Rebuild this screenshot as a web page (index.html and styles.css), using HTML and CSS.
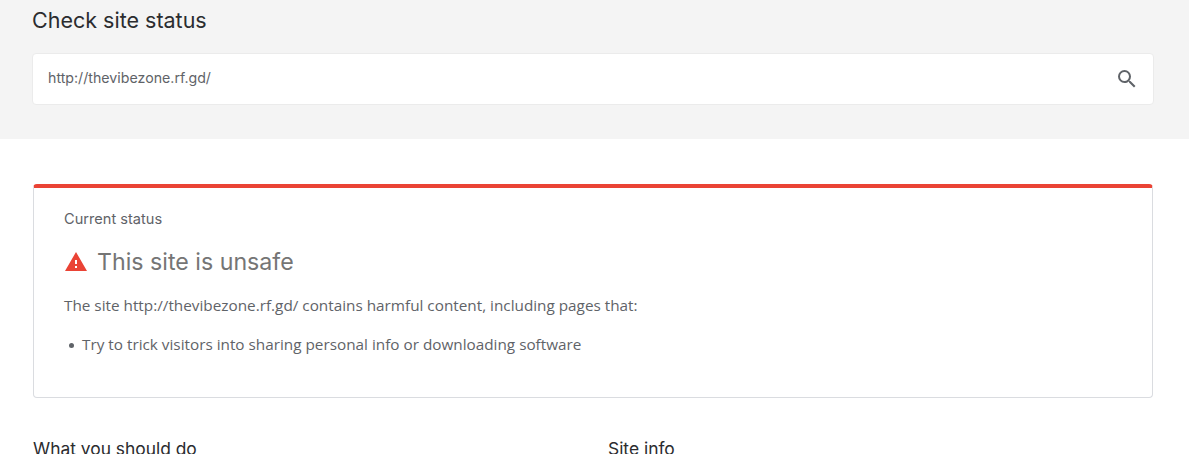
FILE: index.html
```html
<!DOCTYPE html>
<html lang="en">
<head>
  <meta charset="UTF-8" />
  <meta name="viewport" content="width=device-width, initial-scale=1.0"/>
  <title>Check site status</title>
  <link rel="stylesheet" href="styles.css">
</head>
<body>
  <section class="search-band">
    <h1>Check site status</h1>
    <div class="search-box">
      <span class="search-url">http://thevibezone.rf.gd/</span>
      <svg class="search-icon" viewBox="0 0 24 24" width="24" height="24">
        <path d="M15.5 14h-.79l-.28-.27A6.47 6.47 0 0 0 16 9.5 6.5 6.5 0 1 0 9.5 16c1.61 0 3.09-.59 4.23-1.57l.27.28v.79l5 4.99L20.49 19l-4.99-5zm-6 0C7.01 14 5 11.99 5 9.5S7.01 5 9.5 5 14 7.01 14 9.5 11.99 14 9.5 14z"/>
      </svg>
    </div>
  </section>

  <main>
    <div class="status-card">
      <div class="status-label">Current status</div>
      <div class="status-title">
        <svg class="warn-icon" viewBox="0 0 24 24" width="24" height="24">
          <path d="M1 21h22L12 2 1 21zm12-3h-2v-2h2v2zm0-4h-2v-4h2v4z"/>
        </svg>
        <h2>This site is unsafe</h2>
      </div>
      <p class="status-text">The site http://thevibezone.rf.gd/ contains harmful content, including pages that:</p>
      <ul class="status-list">
        <li>Try to trick visitors into sharing personal info or downloading software</li>
      </ul>
    </div>

    <div class="columns">
      <h3>What you should do</h3>
      <h3>Site info</h3>
    </div>
  </main>
</body>
</html>
```

FILE: styles.css
```css
html, body {
  height: 100%;
  overflow: hidden;
}
body {
  margin: 0;
  font-family: "Open Sans", sans-serif;
  color: #5f6368;
  background: #fff;
}
h1, h2, h3, p, ul {
  margin: 0;
  font-weight: 400;
}
.search-band {
  background: #f4f4f4;
  height: 139px;
  padding: 7px 35px 0 32px;
  box-sizing: border-box;
}
.search-band h1 {
  font-family: Inter, sans-serif;
  font-size: 21.5px;
  line-height: 26px;
  color: #2b2c2f;
}
.search-box {
  display: flex;
  align-items: center;
  justify-content: space-between;
  height: 52px;
  margin-top: 20px;
  padding: 0 14px 0 15px;
  background: #fff;
  border: 1px solid #ebebeb;
  border-radius: 4px;
  box-sizing: border-box;
}
.search-url {
  font-family: Inter, sans-serif;
  font-size: 14.2px;
  line-height: 18px;
  margin-top: -2px;
  color: #5f6368;
}
.search-icon {
  fill: #5f6368;
}
main {
  padding: 45px 36px 0 33px;
}
.status-card {
  height: 214px;
  padding: 22px 30px 0;
  border: 1px solid #dadce0;
  border-top: 4px solid #ea4335;
  border-radius: 4px;
  box-sizing: border-box;
}
.status-label {
  font-family: Inter, sans-serif;
  font-size: 14.6px;
  line-height: 18px;
}
.status-title {
  display: flex;
  align-items: center;
  gap: 9px;
  margin-top: 19px;
}
.warn-icon {
  fill: #ea4335;
}
.status-title h2 {
  font-family: Inter, sans-serif;
  font-size: 23.2px;
  line-height: 30px;
  color: #757575;
}
.status-text {
  margin-top: 18px;
  font-size: 15.3px;
  line-height: 20px;
}
.status-list {
  margin-top: 19px;
  padding-left: 5px;
  list-style: none;
  font-size: 15.3px;
  line-height: 20px;
}
.status-list li::before {
  content: "";
  display: inline-block;
  width: 5px;
  height: 5px;
  margin-right: 8px;
  border-radius: 50%;
  background: #5f6368;
  vertical-align: 2px;
}
.columns {
  display: grid;
  grid-template-columns: 575px 1fr;
  margin-top: 39px;
}
.columns h3 {
  font-family: Inter, sans-serif;
  font-size: 17.4px;
  line-height: 24px;
  color: #2b2c2f;
}
```
